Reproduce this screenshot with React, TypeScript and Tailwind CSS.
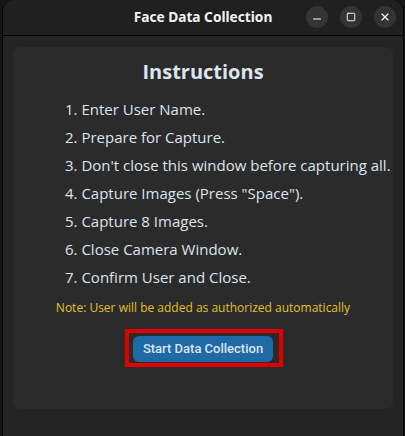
import { Minus, Square, X } from "lucide-react";

const steps = [
  "1. Enter User Name.",
  "2. Prepare for Capture.",
  "3. Don't close this window before capturing all.",
  '4. Capture Images (Press "Space").',
  "5. Capture 8 Images.",
  "6. Close Camera Window.",
  "7. Confirm User and Close.",
];

export default function App() {
  return (
    <div className="w-[405px] h-[436px] bg-[#161616] overflow-hidden">
      <div className="ml-[2px] w-[402px] h-[436px] flex flex-col bg-[#242424] rounded-t-[12px] border-l border-r border-black overflow-hidden">
        {/* title bar */}
        <div className="relative h-[36px] shrink-0 bg-[#202020] border-b border-black flex items-center justify-center">
          <span className="text-[13.7px] font-bold text-[#f2f2f2] [font-family:'Noto_Sans',sans-serif]">
            Face Data Collection
          </span>
          <div className="absolute right-[7px] top-[6px] flex gap-[12px]">
            <div className="w-[22px] h-[22px] rounded-full bg-[#343434] flex items-center justify-center">
              <Minus className="w-[12px] h-[12px] text-white mt-[4px]" strokeWidth={2} />
            </div>
            <div className="w-[22px] h-[22px] rounded-full bg-[#343434] flex items-center justify-center">
              <Square className="w-[10px] h-[10px] text-white" strokeWidth={2.2} />
            </div>
            <div className="w-[22px] h-[22px] rounded-full bg-[#343434] flex items-center justify-center">
              <X className="w-[12px] h-[12px] text-white" strokeWidth={2.2} />
            </div>
          </div>
        </div>

        {/* card */}
        <div className="mt-[11px] ml-[10px] w-[380px] h-[362px] rounded-[7px] bg-[#2b2b2b] flex flex-col [font-family:'Open_Sans',sans-serif]">
          <h1 className="pt-[11px] text-center text-[20px] leading-[28px] font-bold text-[#dce4ee]">
            Instructions
          </h1>
          <ul className="mt-[9px] pl-[52px]">
            {steps.map((s) => (
              <li key={s} className="text-[15px] leading-[28px] text-[#dce4ee] whitespace-nowrap">
                {s}
              </li>
            ))}
          </ul>
          <p className="mt-[8px] text-center text-[12px] leading-[18px] text-[#e3c02c]">
            Note: User will be added as authorized automatically
          </p>
          <div className="mt-[12px] flex justify-center">
            <div className="border-4 border-[#e00000] pl-[4px] pr-[6px] pt-[2px] pb-[1px] ml-[2px]">
              <button className="w-[140px] h-[26px] rounded-[6px] bg-[#1f6aa5] text-[13px] font-medium text-[#dce4ee] [font-family:Roboto,sans-serif]">
                Start Data Collection
              </button>
            </div>
          </div>
        </div>
      </div>
    </div>
  );
}
